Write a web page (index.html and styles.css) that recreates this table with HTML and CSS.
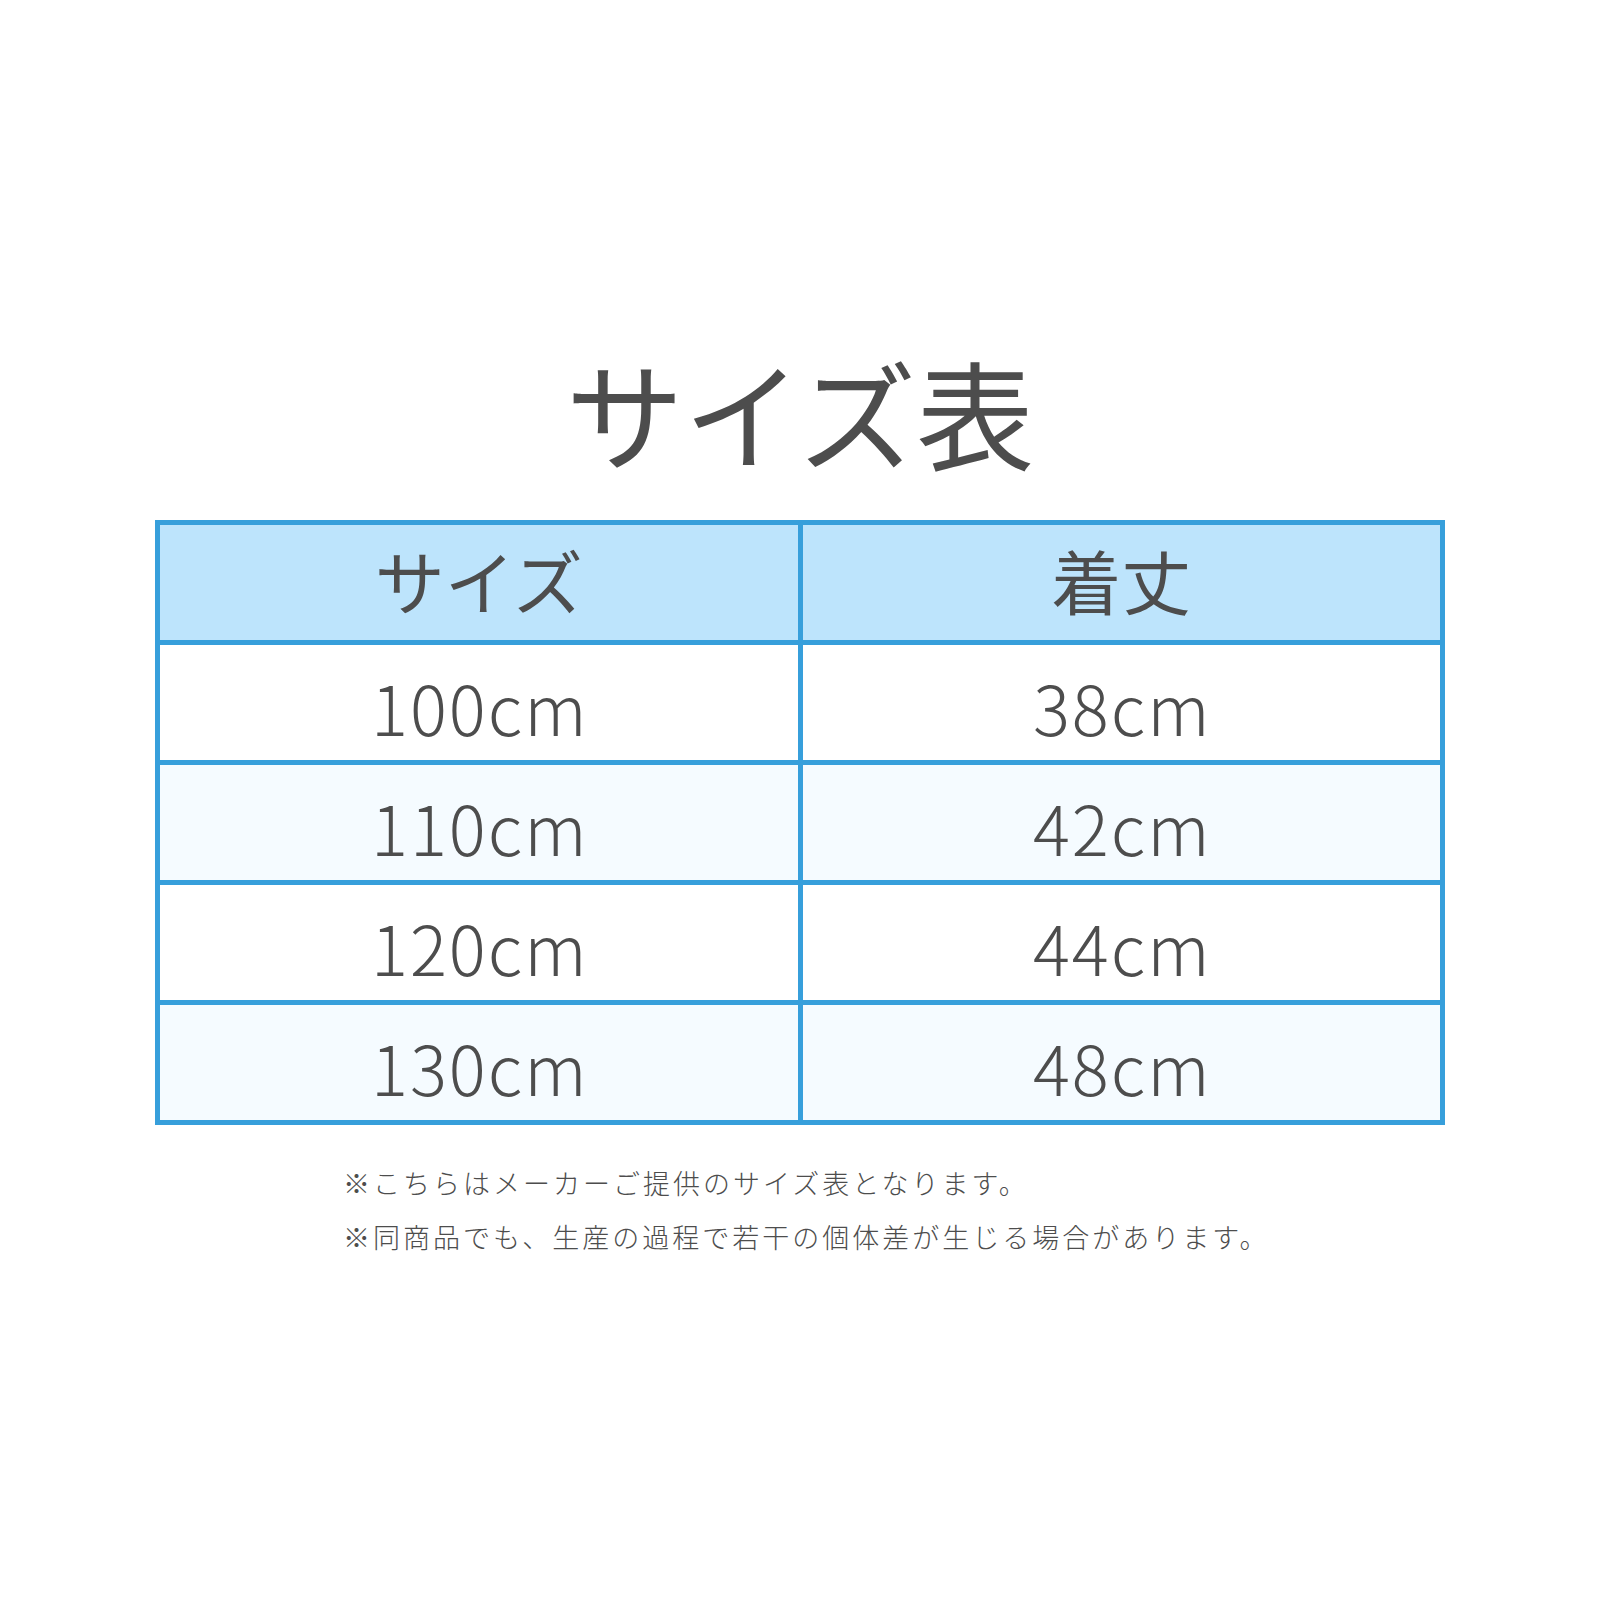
FILE: index.html
```html
<!DOCTYPE html>
<html lang="ja">
<head>
<meta charset="utf-8">
<title>サイズ表</title>
<link rel="stylesheet" href="styles.css">
</head>
<body>
<main class="page">
  <h1 class="title">サイズ表</h1>
  <div class="size-table">
    <div class="cell head">サイズ</div>
    <div class="cell head">着丈</div>
    <div class="cell num">100cm</div>
    <div class="cell num">38cm</div>
    <div class="cell num alt">110cm</div>
    <div class="cell num alt">42cm</div>
    <div class="cell num">120cm</div>
    <div class="cell num">44cm</div>
    <div class="cell num alt">130cm</div>
    <div class="cell num alt">48cm</div>
  </div>
  <div class="notes">
    <p class="note">※こちらはメーカーご提供のサイズ表となります。</p>
    <p class="note">※同商品でも、生産の過程で若干の個体差が生じる場合があります。</p>
  </div>
</main>
</body>
</html>
```

FILE: styles.css
```css
html, body {
  margin: 0;
  padding: 0;
  background: #ffffff;
}

body {
  font-family: "Noto Sans CJK JP", "Noto Sans", sans-serif;
  color: #4d4d4d;
}

.page {
  width: 1600px;
  min-height: 1600px;
  box-sizing: border-box;
  padding-top: 352px;
  display: flex;
  flex-direction: column;
  align-items: center;
}

.title {
  margin: 0;
  font-size: 118px;
  font-weight: 400;
  line-height: 1;
  height: 118px;
}

.size-table {
  margin-top: 50px;
  width: 1290px;
  box-sizing: border-box;
  padding: 5px;
  background: #379fdb;
  display: grid;
  grid-template-columns: 1fr 1fr;
  grid-auto-rows: 115px;
  gap: 5px;
}

.cell {
  background: #ffffff;
  display: flex;
  align-items: center;
  justify-content: center;
  line-height: 1;
  box-sizing: border-box;
}

.cell.head {
  background: #bde4fc;
  font-size: 70px;
  font-weight: 400;
  padding-bottom: 6px;
}

.cell.num {
  font-size: 69px;
  font-weight: 300;
  letter-spacing: 2px;
  padding-top: 8px;
  padding-left: 2px;
}

.cell.alt {
  background: #f5fbff;
}

.notes {
  align-self: flex-start;
  margin-left: 343px;
  margin-top: 31px;
}

.note {
  margin: 0;
  font-size: 27px;
  line-height: 54px;
  letter-spacing: 3px;
  font-weight: 300;
  white-space: nowrap;
}
```
